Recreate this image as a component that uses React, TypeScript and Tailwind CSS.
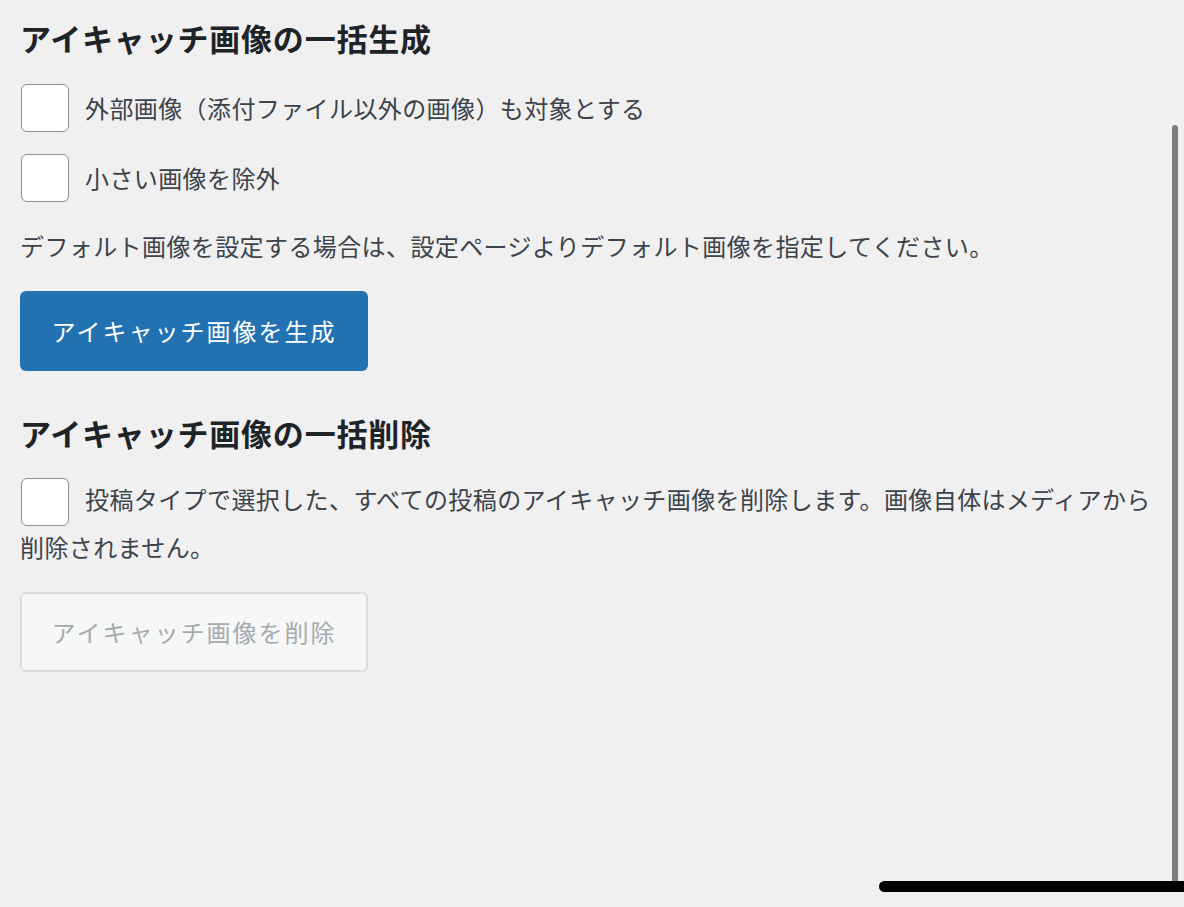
const font = { fontFamily: '"Noto Sans CJK JP", "Noto Sans", sans-serif' }

function Box() {
    return <span className="inline-block h-12 w-12 shrink-0 rounded-md border border-[#8c8f94] bg-white align-middle" />
}

export default function App() {
    return (
        <div className="relative min-h-[907px] overflow-hidden bg-[#f0f0f1] px-5 pt-4 text-[#3c434a] tracking-[0.4px]" style={font}>
            <h2 className="text-[31px] font-bold leading-[43px] tracking-[0.8px] text-[#1d2327]">アイキャッチ画像の一括生成</h2>

            <label className="mt-[25px] flex items-center gap-4 text-[24px] leading-9">
                <span className="ml-px flex"><Box /></span>
                外部画像（添付ファイル以外の画像）も対象とする
            </label>
            <label className="mt-[22px] flex items-center gap-4 text-[24px] leading-9">
                <span className="ml-px flex"><Box /></span>
                小さい画像を除外
            </label>

            <p className="mt-[26px] text-[24px] leading-9">
                デフォルト画像を設定する場合は、設定ページよりデフォルト画像を指定してください。
            </p>

            <button className="mt-[27px] h-20 w-[348px] rounded-md bg-[#2271b1] text-[24px] tracking-[2px] text-white">
                アイキャッチ画像を生成
            </button>

            <h2 className="mt-[40px] text-[31px] font-bold leading-[43px] tracking-[0.8px] text-[#1d2327]">アイキャッチ画像の一括削除</h2>

            <p className="mt-[24px] text-[24px] leading-[42px]">
                <span className="ml-px mr-4"><Box /></span>
                投稿タイプで選択した、すべての投稿のアイキャッチ画像を削除します。画像自体はメディアから削除されません。
            </p>

            <button disabled className="mt-[24px] h-20 w-[348px] rounded-md border-2 border-[#dcdcde] bg-[#f6f7f7] text-[24px] tracking-[2px] text-[#a7aaad]">
                アイキャッチ画像を削除
            </button>

            {/* scrollbar artifacts */}
            <div className="absolute left-[1172px] top-[125px] h-[760px] w-[6px] rounded-t-full bg-[#7d7d7d]" />
            <div className="absolute left-[879px] top-[881px] h-[11px] w-[305px] rounded-l-full bg-black" />
        </div>
    )
}
